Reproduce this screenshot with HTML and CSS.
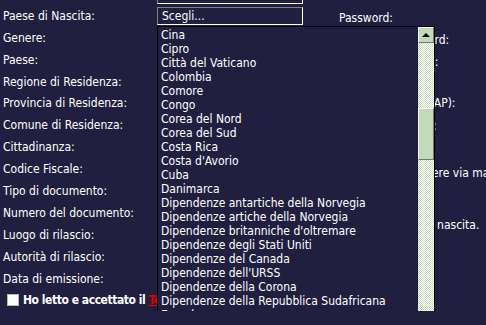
FILE: index.html
```html
<!DOCTYPE html>
<html lang="it">
  <head>
    <meta charset="UTF-8">
    <title>Registrazione</title>
    <link rel="stylesheet" href="styles.css">
  </head>
  <body>
    <form class="page">
      <div class="col-left">
        <div class="row row-prev"><label></label><div class="field"></div></div>
        <div class="row">
          <label>Paese di Nascita:</label>
          <div class="select-wrap">
            <div class="field">Scegli...</div>
            <!-- open dropdown list -->
            <div class="dropdown">
              <ul class="options">
                <li>Cina</li>
                <li>Cipro</li>
                <li>Città del Vaticano</li>
                <li>Colombia</li>
                <li>Comore</li>
                <li>Congo</li>
                <li>Corea del Nord</li>
                <li>Corea del Sud</li>
                <li>Costa Rica</li>
                <li>Costa d'Avorio</li>
                <li>Cuba</li>
                <li>Danimarca</li>
                <li>Dipendenze antartiche della Norvegia</li>
                <li>Dipendenze artiche della Norvegia</li>
                <li>Dipendenze britanniche d'oltremare</li>
                <li>Dipendenze degli Stati Uniti</li>
                <li>Dipendenze del Canada</li>
                <li>Dipendenze dell'URSS</li>
                <li>Dipendenze della Corona</li>
                <li>Dipendenze della Repubblica Sudafricana</li>
                <li>Ecuador</li>
                <li>Egitto</li>
                <li>El Salvador</li>
              </ul>
              <div class="scrollbar">
                <div class="sb-up"><span class="arrow"></span></div>
                <div class="sb-thumb"></div>
              </div>
            </div>
          </div>
        </div>
        <div class="row"><label>Genere:</label></div>
        <div class="row"><label>Paese:</label></div>
        <div class="row"><label>Regione di Residenza:</label></div>
        <div class="row"><label>Provincia di Residenza:</label></div>
        <div class="row"><label>Comune di Residenza:</label></div>
        <div class="row"><label>Cittadinanza:</label></div>
        <div class="row"><label>Codice Fiscale:</label></div>
        <div class="row"><label>Tipo di documento:</label></div>
        <div class="row"><label>Numero del documento:</label></div>
        <div class="row"><label>Luogo di rilascio:</label></div>
        <div class="row"><label>Autorità di rilascio:</label></div>
        <div class="row"><label>Data di emissione:</label></div>
        <div class="agree">
          <span class="checkbox"></span>
          <span>Ho letto e accettato il <a class="terms" href="#">Termini e condizioni</a></span>
        </div>
      </div>

      <div class="col-right">
        <div>Validità:</div>
        <div>Password:</div>
        <div>Conferma Password:</div>
        <div>Indirizzo di e-mail:</div>
        <div>Città:</div>
        <div>Codice postale (CAP):</div>
        <div>Telefono cellulare:</div>
        <div></div>
        <div>Sì, desidero ricevere via mail</div>
        <div></div>
        <div>Inserire la data di nascita.</div>
      </div>
    </form>
  </body>
</html>
```

FILE: styles.css
```css
html, body {
    margin: 0;
    overflow: hidden;
}
body {
    background-color: #201f3f;
    color: #fff;
    font-family: "DejaVu Sans Condensed", "Liberation Sans", sans-serif;
    font-size: 12px;
}
.page {
    display: grid;
    grid-template-columns: 339px 1fr;
    margin-top: -17px;
}
.row {
    display: flex;
    align-items: center;
    height: 21.9px;
}
.row label {
    width: 154px;
    padding-left: 3px;
}
.row-prev .field {
    margin-top: 2px;
}
.field {
    box-sizing: border-box;
    width: 146px;
    height: 18px;
    padding-left: 4px;
    line-height: 16px;
    border: 1px solid;
    border-color: #808080 #fff #fff #808080;
}
.select-wrap {
    position: relative;
}
.dropdown {
    position: absolute;
    top: 19px;
    left: 0;
    z-index: 2;
    display: flex;
    width: 278px;
    height: 320px;
    box-sizing: border-box;
    border: 1px solid #000;
    background-color: #201f3f;
}
.options {
    flex: 1;
    margin: 0;
    padding: 1px 0 0 3px;
    list-style: none;
    overflow: hidden;
}
.options li {
    height: 14px;
    line-height: 14px;
    white-space: nowrap;
}
.scrollbar {
    width: 16px;
    background: repeating-conic-gradient(#c6dbbd 0 25%, #fff 0 50%) 0 0 / 2px 2px;
}
.sb-up, .sb-thumb {
    box-sizing: border-box;
    background-color: #c2d9ba;
    border: 1px solid;
    border-color: #f4f8f2 #6f7a6c #6f7a6c #f4f8f2;
}
.sb-up {
    display: flex;
    align-items: center;
    justify-content: center;
    height: 16px;
}
.arrow {
    width: 0;
    height: 0;
    border-left: 4px solid transparent;
    border-right: 4px solid transparent;
    border-bottom: 4px solid #000;
}
.sb-thumb {
    height: 52px;
    margin-top: 65px;
}
.agree {
    display: flex;
    align-items: center;
    gap: 4px;
    height: 22px;
    padding-left: 7px;
    font-weight: bold;
    letter-spacing: -0.45px;
}
.checkbox {
    box-sizing: border-box;
    width: 12px;
    height: 12px;
    background-color: #fff;
    border: 1px solid #b8b8b8;
}
.terms {
    color: #e00000;
}
.col-right {
    display: grid;
    grid-template-rows: 21px 23px 22px 21px 20px 22px 24px 22px 25px 26px 27px;
    align-items: center;
    margin-top: 2px;
    white-space: nowrap;
}
```
